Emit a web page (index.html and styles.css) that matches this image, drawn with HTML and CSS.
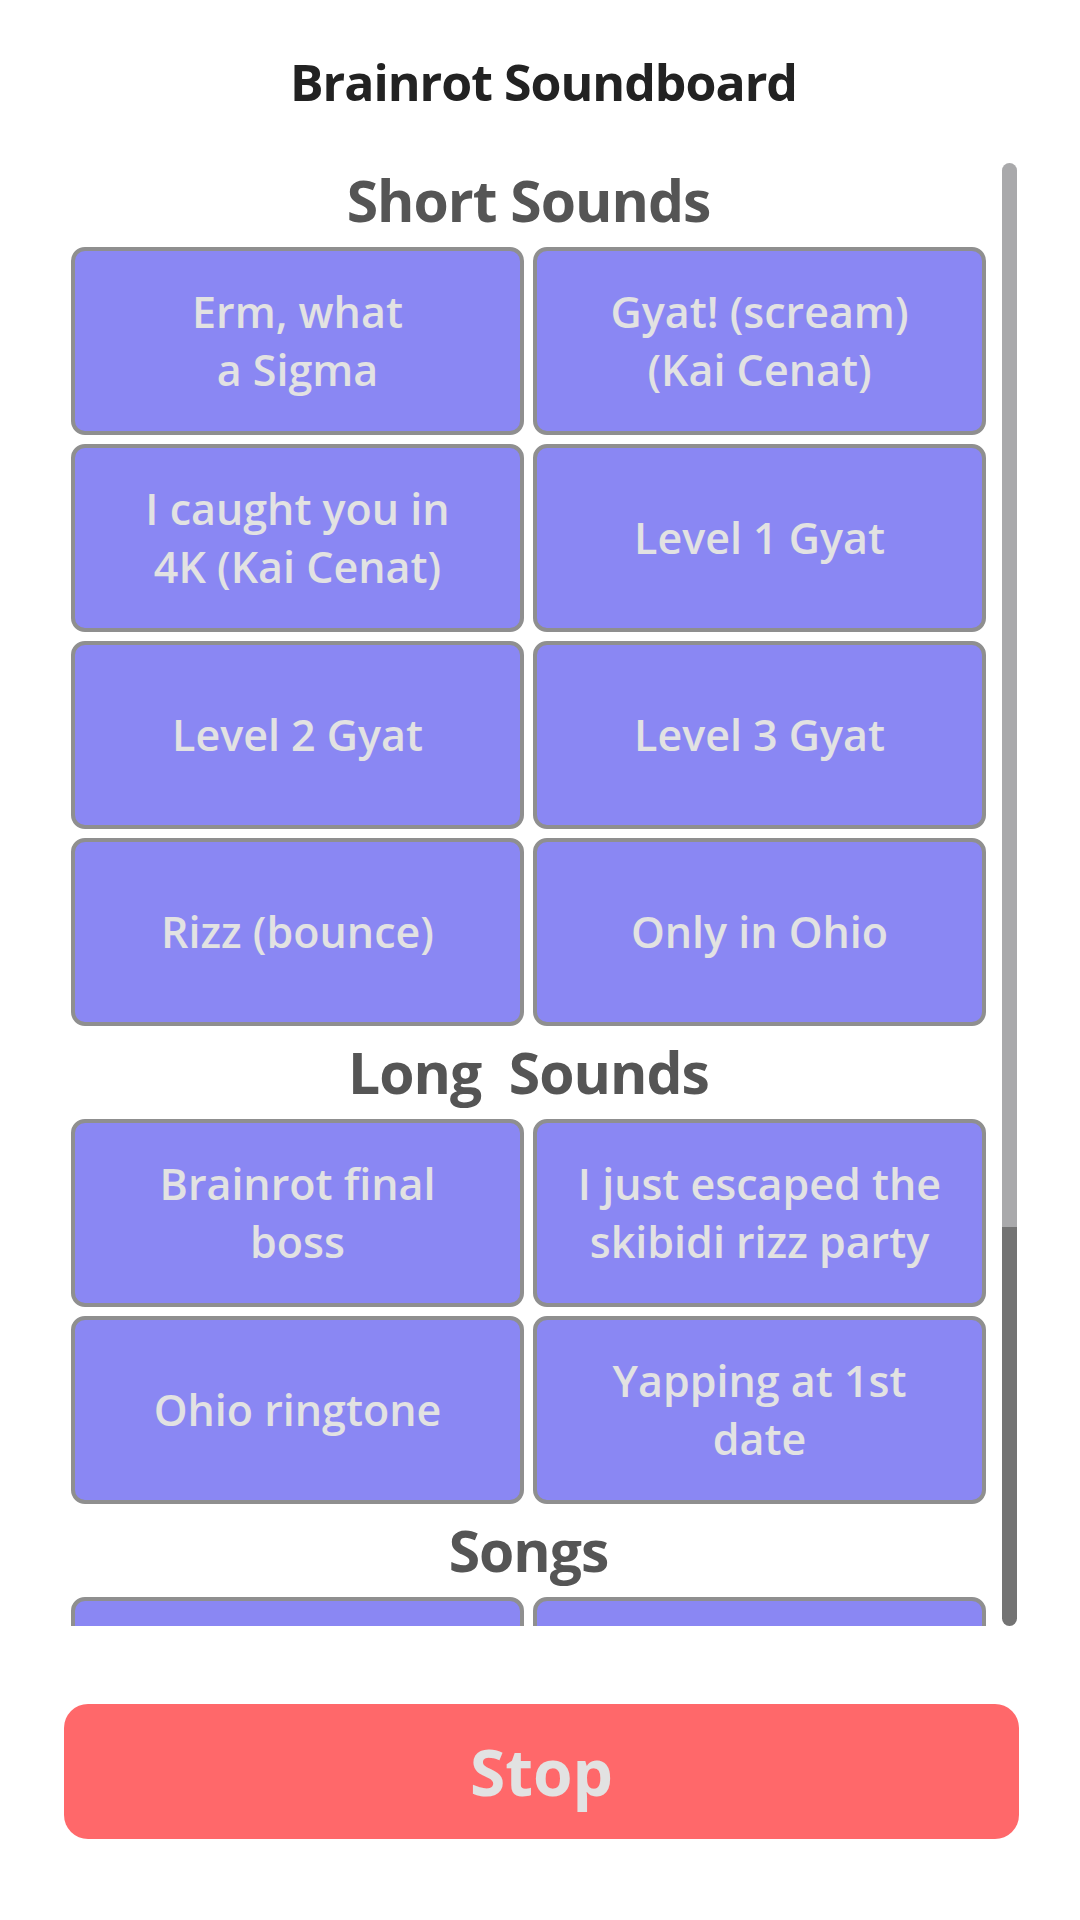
FILE: index.html
```html
<!DOCTYPE html>
<html lang="en">
<head>
<meta charset="utf-8">
<title>Brainrot Soundboard</title>
<link rel="stylesheet" href="styles.css">
</head>
<body>
<div class="app">
  <header class="top">
    <h1 class="title">Brainrot Soundboard</h1>
  </header>
  <div class="board">
    <div class="list">
      <h2 class="section">Short Sounds</h2>
      <div class="grid">
        <button class="pad">Erm, what<br>a Sigma</button>
        <button class="pad">Gyat! (scream)<br>(Kai Cenat)</button>
        <button class="pad">I caught you in<br>4K (Kai Cenat)</button>
        <button class="pad">Level 1 Gyat</button>
        <button class="pad">Level 2 Gyat</button>
        <button class="pad">Level 3 Gyat</button>
        <button class="pad">Rizz (bounce)</button>
        <button class="pad">Only in Ohio</button>
      </div>
      <h2 class="section">Long&nbsp; Sounds</h2>
      <div class="grid">
        <button class="pad">Brainrot final<br>boss</button>
        <button class="pad">I just escaped the<br>skibidi rizz party</button>
        <button class="pad">Ohio ringtone</button>
        <button class="pad">Yapping at 1st<br>date</button>
      </div>
      <h2 class="section">Songs</h2>
      <div class="grid">
        <button class="pad" aria-label="Song 1"></button>
        <button class="pad" aria-label="Song 2"></button>
      </div>
    </div>
    <div class="scrollbar">
      <div class="track"></div>
      <div class="thumb"></div>
    </div>
  </div>
  <button class="stop">Stop</button>
</div>
</body>
</html>
```

FILE: styles.css
```css
html, body {
  margin: 0;
  padding: 0;
  background: #ffffff;
}

body {
  width: 1080px;
  height: 1920px;
  overflow: hidden;
  font-family: "Open Sans", Roboto, "Liberation Sans", sans-serif;
}

.app {
  display: flex;
  flex-direction: column;
  padding: 0 61px 0 64px;
}

.top {
  height: 154px;
  display: flex;
  justify-content: center;
}

.title {
  margin: 0;
  padding-top: 52px;
  padding-left: 4px;
  font-size: 50px;
  line-height: 60px;
  font-weight: 700;
  color: #222222;
  letter-spacing: -1px;
}

.board {
  height: 1472px;
  display: flex;
}

.list {
  flex: 1;
  overflow: hidden;
  padding-left: 7px;
}

.section {
  margin: 0;
  height: 93px;
  font-size: 57px;
  line-height: 93px;
  font-weight: 700;
  color: #555555;
  text-align: center;
  letter-spacing: -1px;
}

.grid {
  display: grid;
  grid-template-columns: 1fr 1fr;
  gap: 9px;
}

.pad {
  height: 188px;
  box-sizing: border-box;
  border: 4px solid #8f8f8f;
  border-radius: 14px;
  background: #8a87f3;
  color: #e2e2e2;
  font-family: "Open Sans", Roboto, "Liberation Sans", sans-serif;
  font-size: 43px;
  font-weight: 600;
  line-height: 58px;
  text-align: center;
  padding: 0 10px;
  letter-spacing: 0;
}

.scrollbar {
  width: 15px;
  margin-left: 16px;
  margin-right: 2px;
  padding-top: 9px;
  display: flex;
  flex-direction: column;
}

.track {
  flex: 1;
  background: #a9a9ab;
  border-radius: 8px 8px 0 0;
}

.thumb {
  height: 399px;
  background: #737373;
  border-radius: 0 0 8px 8px;
}

.stop {
  margin-top: 78px;
  height: 135px;
  border: none;
  border-radius: 24px;
  background: #ff686a;
  color: #e2e2e2;
  font-family: "Open Sans", Roboto, "Liberation Sans", sans-serif;
  font-size: 64px;
  font-weight: 700;
  letter-spacing: 0;
}
```
